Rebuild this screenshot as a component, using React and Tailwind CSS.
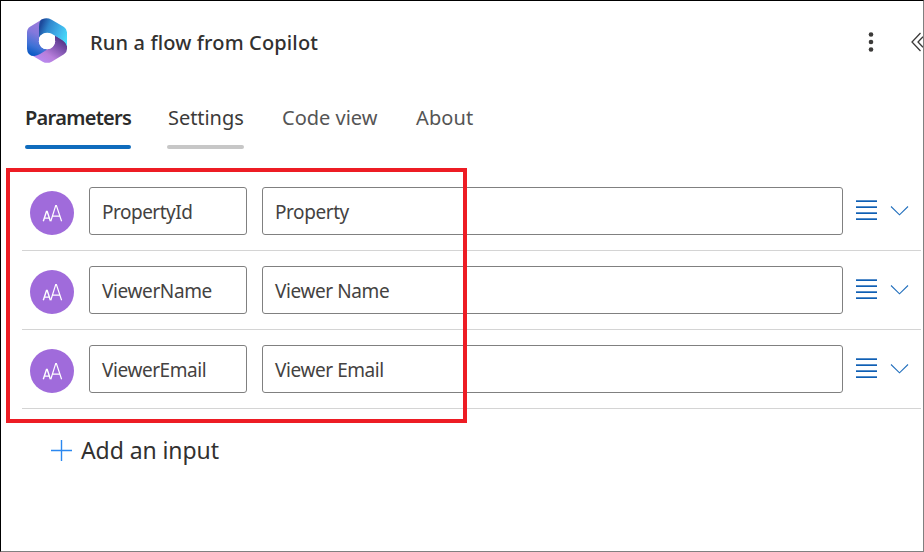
const parameters = [
  { name: "PropertyId", value: "Property", nameTracking: "tracking-[-0.5px]", valueTracking: "tracking-[-0.42px]" },
  { name: "ViewerName", value: "Viewer Name", nameTracking: "tracking-[-0.38px]", valueTracking: "tracking-[-0.4px]" },
  { name: "ViewerEmail", value: "Viewer Email", nameTracking: "tracking-[-0.42px]", valueTracking: "tracking-[-0.42px]" },
];

function CopilotLogo() {
  return (
    <svg className="mb-1 h-[47px] w-[42px] shrink-0" viewBox="78 51 126 141" aria-hidden="true">
      <defs>
        <linearGradient id="left" x1="0.6" y1="0" x2="0.35" y2="1">
          <stop offset="0" stopColor="#a07bdc" />
          <stop offset="0.4" stopColor="#8478dc" />
          <stop offset="0.75" stopColor="#3f72d6" />
          <stop offset="1" stopColor="#0a58c4" />
        </linearGradient>
        <linearGradient id="top" x1="0" y1="0.4" x2="1" y2="0.8">
          <stop offset="0" stopColor="#1d4a9c" />
          <stop offset="0.25" stopColor="#2f86cd" />
          <stop offset="0.6" stopColor="#3eaee8" />
          <stop offset="1" stopColor="#48e0fb" />
        </linearGradient>
        <linearGradient id="bottom" x1="0.95" y1="0.15" x2="0.25" y2="0.9">
          <stop offset="0" stopColor="#4b2f7f" />
          <stop offset="0.35" stopColor="#8055b0" />
          <stop offset="0.7" stopColor="#b87edb" />
          <stop offset="1" stopColor="#b98af0" />
        </linearGradient>
      </defs>
      <path fill="url(#bottom)" d="M201 138V147Q201 157 192 163L155 185Q141 192 128 185L90 163L141 148Q165 142 165 122V106L185 118Q199 126 201 138Z" />
      <path fill="url(#left)" d="M128 57L90 80Q81 86 81 97V146Q82 168 103 168Q112 167 120 162L143 148Q117 147 117 122V75Z" />
      <path fill="url(#top)" d="M117 113V80Q117 60 128 57Q141 52 155 59L192 81Q201 87 201 97V139Q198 127 185 119L155 101Q141 95 129 101Q119 106 117 113Z" />
      <circle cx="141" cy="123.500" r="24.500" fill="#fff" />
    </svg>
  );
}

function TextTypeIcon() {
  return (
    <div className="flex size-11 shrink-0 items-center justify-center rounded-full bg-[#a06bdb]">
      <svg className="size-11" viewBox="0 0 44 44" fill="none" stroke="#fff" aria-hidden="true">
        <path strokeWidth="1.400" d="M13.300 30.300L16.500 20.500h.7l3.200 9.800M14.300 27.100h5" />
        <path strokeWidth="1.200" d="M20.800 30.300L25.700 14.500h.7l5.200 15.800M22.500 25.100h7.400" />
      </svg>
    </div>
  );
}

function ParameterRow({ name, value, nameTracking, valueTracking }) {
  const field = "flex h-12 items-center rounded-[3px] border border-[#808080] bg-white pl-3 pt-[2px] text-[19px]";
  return (
    <div className="flex h-[79px] items-center border-b border-[#d4d4d4] pl-2">
      <div className="pt-1"><TextTypeIcon /></div>
      <div className={`ml-[15px] w-[158px] ${field}`}><span className={nameTracking}>{name}</span></div>
      <div className={`ml-[15px] w-[581px] ${field}`}><span className={valueTracking}>{value}</span></div>
      <svg className="ml-[13px] h-6 w-[21px]" viewBox="0 0 21 24" aria-hidden="true">
        <g fill="#0f5fb4">
          <rect y="1.300" width="21" height="1.700" />
          <rect y="7.300" width="21" height="1.700" />
          <rect y="13.300" width="21" height="1.700" />
          <rect y="19.300" width="21" height="1.700" />
        </g>
      </svg>
      <svg className="ml-[13px] h-6 w-[19px]" viewBox="0 0 19 24" fill="none" stroke="#2370bd" strokeWidth="1.100" aria-hidden="true">
        <path d="M1 7.500l8.500 8.300L18 7.500" />
      </svg>
    </div>
  );
}

export default function App() {
  return (
    <div className="relative h-[552px] w-[924px] overflow-hidden border border-t-black border-l-black border-r-[#808080] border-b-[#808080] bg-white font-['Noto_Sans','Open_Sans',sans-serif] text-[#444241]">
      <header className="flex h-[82px] items-center pl-[25px]">
        <CopilotLogo />
        <h1 className="ml-[22px] pt-[2px] text-[20px] font-medium tracking-[0.14px] whitespace-nowrap text-[#323130]">Run a flow from Copilot</h1>
        <div className="ml-auto flex items-center">
          <svg className="h-6 w-2" viewBox="0 0 8 24" fill="#3b3a39" aria-hidden="true">
            <circle cx="4" cy="4.500" r="2.300" /><circle cx="4" cy="12" r="2.300" /><circle cx="4" cy="19.500" r="2.300" />
          </svg>
          <svg className="ml-9 h-5 w-3" viewBox="0 0 12 20" fill="none" stroke="#3b3a39" strokeWidth="1.300" aria-hidden="true">
            <path d="M9.500 1L1 10l8.500 9M12 4.700L7 10l5 5.300" />
          </svg>
        </div>
      </header>

      <nav className="flex h-[89px] items-start pl-6 pt-[19px] text-[20px] leading-8 whitespace-nowrap text-[#555]">
        <div className="flex h-[47px] w-[106px] flex-col justify-between font-semibold text-[#2b2b2b]">
          <span className="tracking-[-0.7px]">Parameters</span>
          <i className="h-1 w-full rounded-full bg-[#0f6cbd]" />
        </div>
        <div className="ml-9 flex h-[47px] w-[77px] flex-col justify-between text-[#3b3a39]">
          <span className="pl-px tracking-[-0.05px]">Settings</span>
          <i className="h-1 w-full rounded-full bg-[#c7c7c7]" />
        </div>
        <div className="ml-[38px] w-[98px]">Code view</div>
        <div className="ml-9 tracking-[0.1px]">About</div>
      </nav>

      <main className="ml-[21px] w-[899px]">
        {parameters.map((parameter) => <ParameterRow key={parameter.name} {...parameter} />)}
        <button className="ml-[29px] mt-5 flex h-[42px] items-center text-[23px] tracking-[-0.08px] text-[#323130]">
          <svg className="h-[21px] w-[21px]" viewBox="0 0 21 21" fill="none" stroke="#2b88f0" strokeWidth="1.400" aria-hidden="true">
            <path d="M10.500 0v21M0 10.500h21" />
          </svg>
          <span className="ml-[9px]">Add an input</span>
        </button>
      </main>

      <div className="pointer-events-none absolute top-[167px] left-[5px] h-[255px] w-[461px] border-4 border-[#ed1c24]" />
    </div>
  );
}
